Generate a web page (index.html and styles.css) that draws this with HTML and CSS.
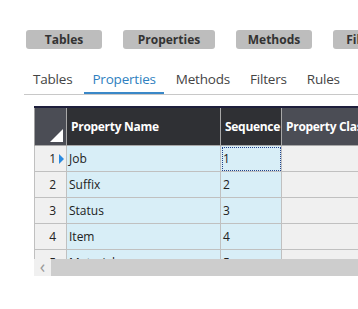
FILE: index.html
```html
<!DOCTYPE html>
<html lang="en">
<head>
    <meta charset="UTF-8">
    <title>Properties</title>
    <link rel="stylesheet" href="styles.css">
</head>
<body>
    <div class="toolbar">
        <button class="tool-btn btn-tables">Tables</button>
        <button class="tool-btn btn-properties">Properties</button>
        <button class="tool-btn btn-methods">Methods</button>
        <button class="tool-btn btn-filters">Filters</button>
    </div>

    <div class="tabs">
        <div class="tab">Tables</div>
        <div class="tab active">Properties</div>
        <div class="tab">Methods</div>
        <div class="tab">Filters</div>
        <div class="tab">Rules</div>
    </div>

    <div class="grid">
        <div class="grid-body">
            <table>
                <colgroup>
                    <col class="c-rownum">
                    <col class="c-name">
                    <col class="c-seq">
                    <col class="c-class">
                </colgroup>
                <thead>
                    <tr>
                        <th class="corner"><span class="corner-mark"></span></th>
                        <th class="col-name">Property Name</th>
                        <th class="col-seq">Sequence</th>
                        <th class="col-class">Property Class</th>
                    </tr>
                </thead>
                <tbody>
                    <tr>
                        <td class="rownum current">1<span class="row-arrow"></span></td>
                        <td class="cell">Job</td>
                        <td class="cell focused">1</td>
                        <td class="cell blank"></td>
                    </tr>
                    <tr>
                        <td class="rownum">2</td>
                        <td class="cell">Suffix</td>
                        <td class="cell">2</td>
                        <td class="cell blank"></td>
                    </tr>
                    <tr>
                        <td class="rownum">3</td>
                        <td class="cell">Status</td>
                        <td class="cell">3</td>
                        <td class="cell blank"></td>
                    </tr>
                    <tr>
                        <td class="rownum">4</td>
                        <td class="cell">Item</td>
                        <td class="cell">4</td>
                        <td class="cell blank"></td>
                    </tr>
                    <tr>
                        <td class="rownum">5</td>
                        <td class="cell">Material</td>
                        <td class="cell">5</td>
                        <td class="cell blank"></td>
                    </tr>
                </tbody>
            </table>
        </div>
        <div class="hscroll">
            <div class="hscroll-btn">&#8249;</div>
            <div class="hscroll-thumb"></div>
        </div>
    </div>
</body>
</html>
```

FILE: styles.css
```css
body, html {
    margin: 0;
    padding: 0;
    background: #fff;
    font-family: "Open Sans", "Noto Sans", sans-serif;
    color: #222;
    overflow: hidden;
    width: 358px;
    height: 309px;
}
.toolbar {
    display: flex;
    gap: 21px;
    padding: 30px 0 0 26px;
    white-space: nowrap;
}
.tool-btn {
    flex: none;
    height: 19px;
    background-color: #bdbdbd;
    border: none;
    border-radius: 3px;
    padding: 0;
    font-family: inherit;
    font-weight: bold;
    font-size: 12px;
    color: #333;
    line-height: 19px;
}
.btn-tables { width: 76px; }
.btn-properties { width: 92px; }
.btn-methods { width: 76px; }
.btn-filters { width: 64px; }
.tabs {
    display: flex;
    gap: 4px;
    margin: 21px 0 0 24px;
    padding-left: 1px;
    border-bottom: 1px solid #c8c8c8;
}
.tab {
    padding: 0 8px;
    height: 22px;
    font-size: 13.5px;
    line-height: 18px;
    color: #444;
    border-bottom: 2px solid transparent;
    letter-spacing: -0.2px;
}
.tab.active {
    color: #2f7fc0;
    border-bottom-color: #3a88c8;
}
.grid {
    margin: 11px 0 0 34px;
    width: 400px;
}
.grid-body {
    height: 151px;
    overflow: hidden;
    border-top: 2px solid #1e1f3c;
}
table {
    width: 400px;
    border-collapse: collapse;
    table-layout: fixed;
    font-size: 12px;
}
.c-rownum { width: 32px; }
.c-name { width: 154px; }
.c-seq { width: 61px; }
.c-class { width: 153px; }
th {
    height: 37px;
    padding: 0 4px;
    text-align: left;
    color: #fff;
    font-weight: bold;
    font-size: 12px;
    white-space: nowrap;
    overflow: hidden;
    border-right: 1px solid #a8a8a8;
    border-bottom: 1px solid #a8a8a8;
    letter-spacing: -0.3px;
}
th.corner {
    padding: 0;
    background: #4b4d55;
    border-left: 1px solid #a0a0a0;
    position: relative;
}
.corner-mark {
    position: absolute;
    right: 3px;
    bottom: 3px;
    width: 0;
    height: 0;
    border-left: 13px solid transparent;
    border-bottom: 13px solid #fff;
}
th.col-name,
th.col-seq {
    background: #2f3034;
}
th.col-class {
    background: #4b4d55;
}
td {
    height: 25px;
    border-right: 1px solid #c0c0c0;
    border-bottom: 1px solid #c0c0c0;
    white-space: nowrap;
}
td.rownum {
    background: #f0f0f0;
    border-left: 1px solid #c0c0c0;
    text-align: right;
    padding: 0 10px 0 0;
    position: relative;
}
.row-arrow {
    position: absolute;
    right: 2px;
    top: 8px;
    width: 0;
    height: 0;
    border-top: 5px solid transparent;
    border-bottom: 5px solid transparent;
    border-left: 5px solid #2a8ae0;
}
td.cell {
    background: #d8eef7;
    padding: 0 2px;
}
td.cell.blank {
    background: #f0f0f0;
}
td.focused {
    outline: 1px dotted #24428a;
    outline-offset: -2px;
}
.hscroll {
    display: flex;
    height: 17px;
}
.hscroll-btn {
    width: 17px;
    background: #f0f0f0;
    color: #9a9a9a;
    font-size: 18px;
    line-height: 15px;
    text-align: center;
}
.hscroll-thumb {
    flex: 1;
    background: #cdcdcd;
}
```
